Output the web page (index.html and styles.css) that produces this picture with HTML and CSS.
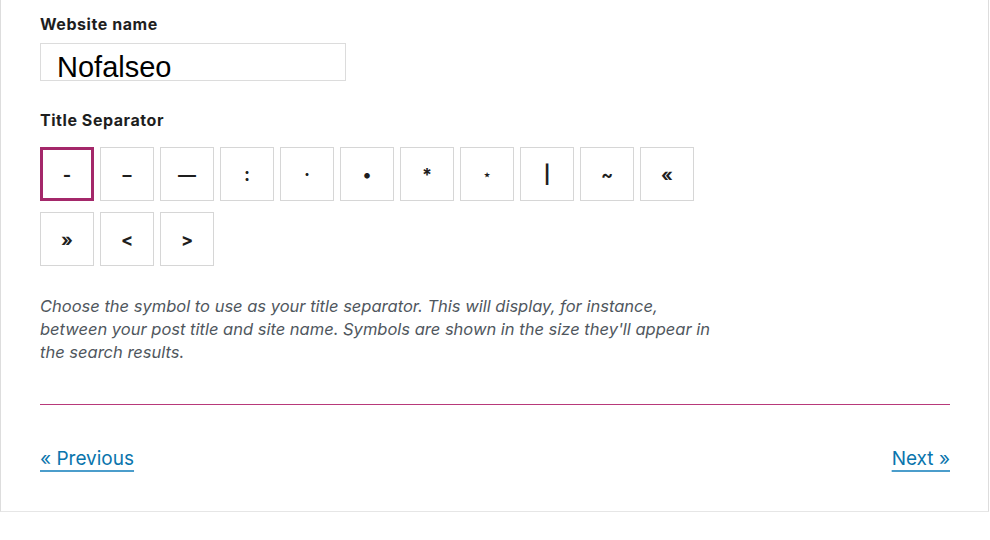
FILE: index.html
```html
<!DOCTYPE html>
<html lang="en">
<head>
<meta charset="utf-8">
<title>Title settings</title>
<link rel="stylesheet" href="styles.css">
</head>
<body>
<div class="card">
  <div class="label">Website name</div>
  <div class="field">Nofalseo</div>
  <div class="label label-sep">Title Separator</div>
  <div class="seps">
    <button class="sep selected">-</button>
    <button class="sep">–</button>
    <button class="sep">—</button>
    <button class="sep">:</button>
    <button class="sep">·</button>
    <button class="sep">•</button>
    <button class="sep">*</button>
    <button class="sep small">⋆</button>
    <button class="sep">|</button>
    <button class="sep">~</button>
    <button class="sep">«</button>
    <button class="sep">»</button>
    <button class="sep">&lt;</button>
    <button class="sep">&gt;</button>
  </div>
  <p class="desc">Choose the symbol to use as your title separator. This will display, for instance, between your post title and site name. Symbols are shown in the size they'll appear in the search results.</p>
  <div class="rule"></div>
  <div class="nav">
    <a href="#" class="link">« Previous</a>
    <a href="#" class="link">Next »</a>
  </div>
</div>
</body>
</html>
```
FILE: styles.css
```css
html, body {
  margin: 0;
  background: #fff;
}
.card {
  box-sizing: border-box;
  width: 989px;
  height: 512px;
  border-left: 1px solid #ddd;
  border-right: 1px solid #ddd;
  border-bottom: 1px solid #e6e6e6;
  padding: 14px 38px 0 39px;
  font-family: Inter, "Noto Sans", sans-serif;
}
.label {
  font-size: 16px;
  font-weight: 700;
  letter-spacing: 0.55px;
  line-height: 20px;
  color: #1e1e1e;
}
.field {
  box-sizing: border-box;
  margin-top: 9px;
  width: 306px;
  border: 1px solid #dcdcdc;
  padding: 10px 0 0 16px;
  font-family: "Liberation Sans", Arial, sans-serif;
  font-size: 29px;
  line-height: 26px;
  color: #000;
}
.label-sep {
  margin-top: 29px;
}
.seps {
  margin-top: 17px;
  width: 700px;
  display: flex;
  flex-wrap: wrap;
  column-gap: 6px;
  row-gap: 11px;
}
.sep {
  box-sizing: border-box;
  width: 54px;
  height: 54px;
  margin: 0;
  padding: 0;
  background: #fff;
  border: 1px solid #d6d6d6;
  font-family: Inter, "DejaVu Sans", sans-serif;
  font-size: 18px;
  font-weight: 700;
  color: #1e1e1e;
  display: flex;
  align-items: center;
  justify-content: center;
}
.sep.selected {
  border: 3px solid #a4286a;
}
.sep.small {
  font-size: 13px;
}
.desc {
  margin: 29px 0 0;
  width: 682px;
  font-size: 16.5px;
  line-height: 23px;
  font-style: italic;
  color: #50575e;
}
.rule {
  margin-top: 40px;
  height: 1px;
  background: #b8397a;
}
.nav {
  margin-top: 42px;
  display: flex;
  justify-content: space-between;
}
.link {
  font-size: 19px;
  line-height: 24px;
  color: #0a75ad;
  text-decoration: underline;
  text-decoration-thickness: 2px;
  text-underline-offset: 5px;
  text-decoration-color: #4b9dcb;
}
```
